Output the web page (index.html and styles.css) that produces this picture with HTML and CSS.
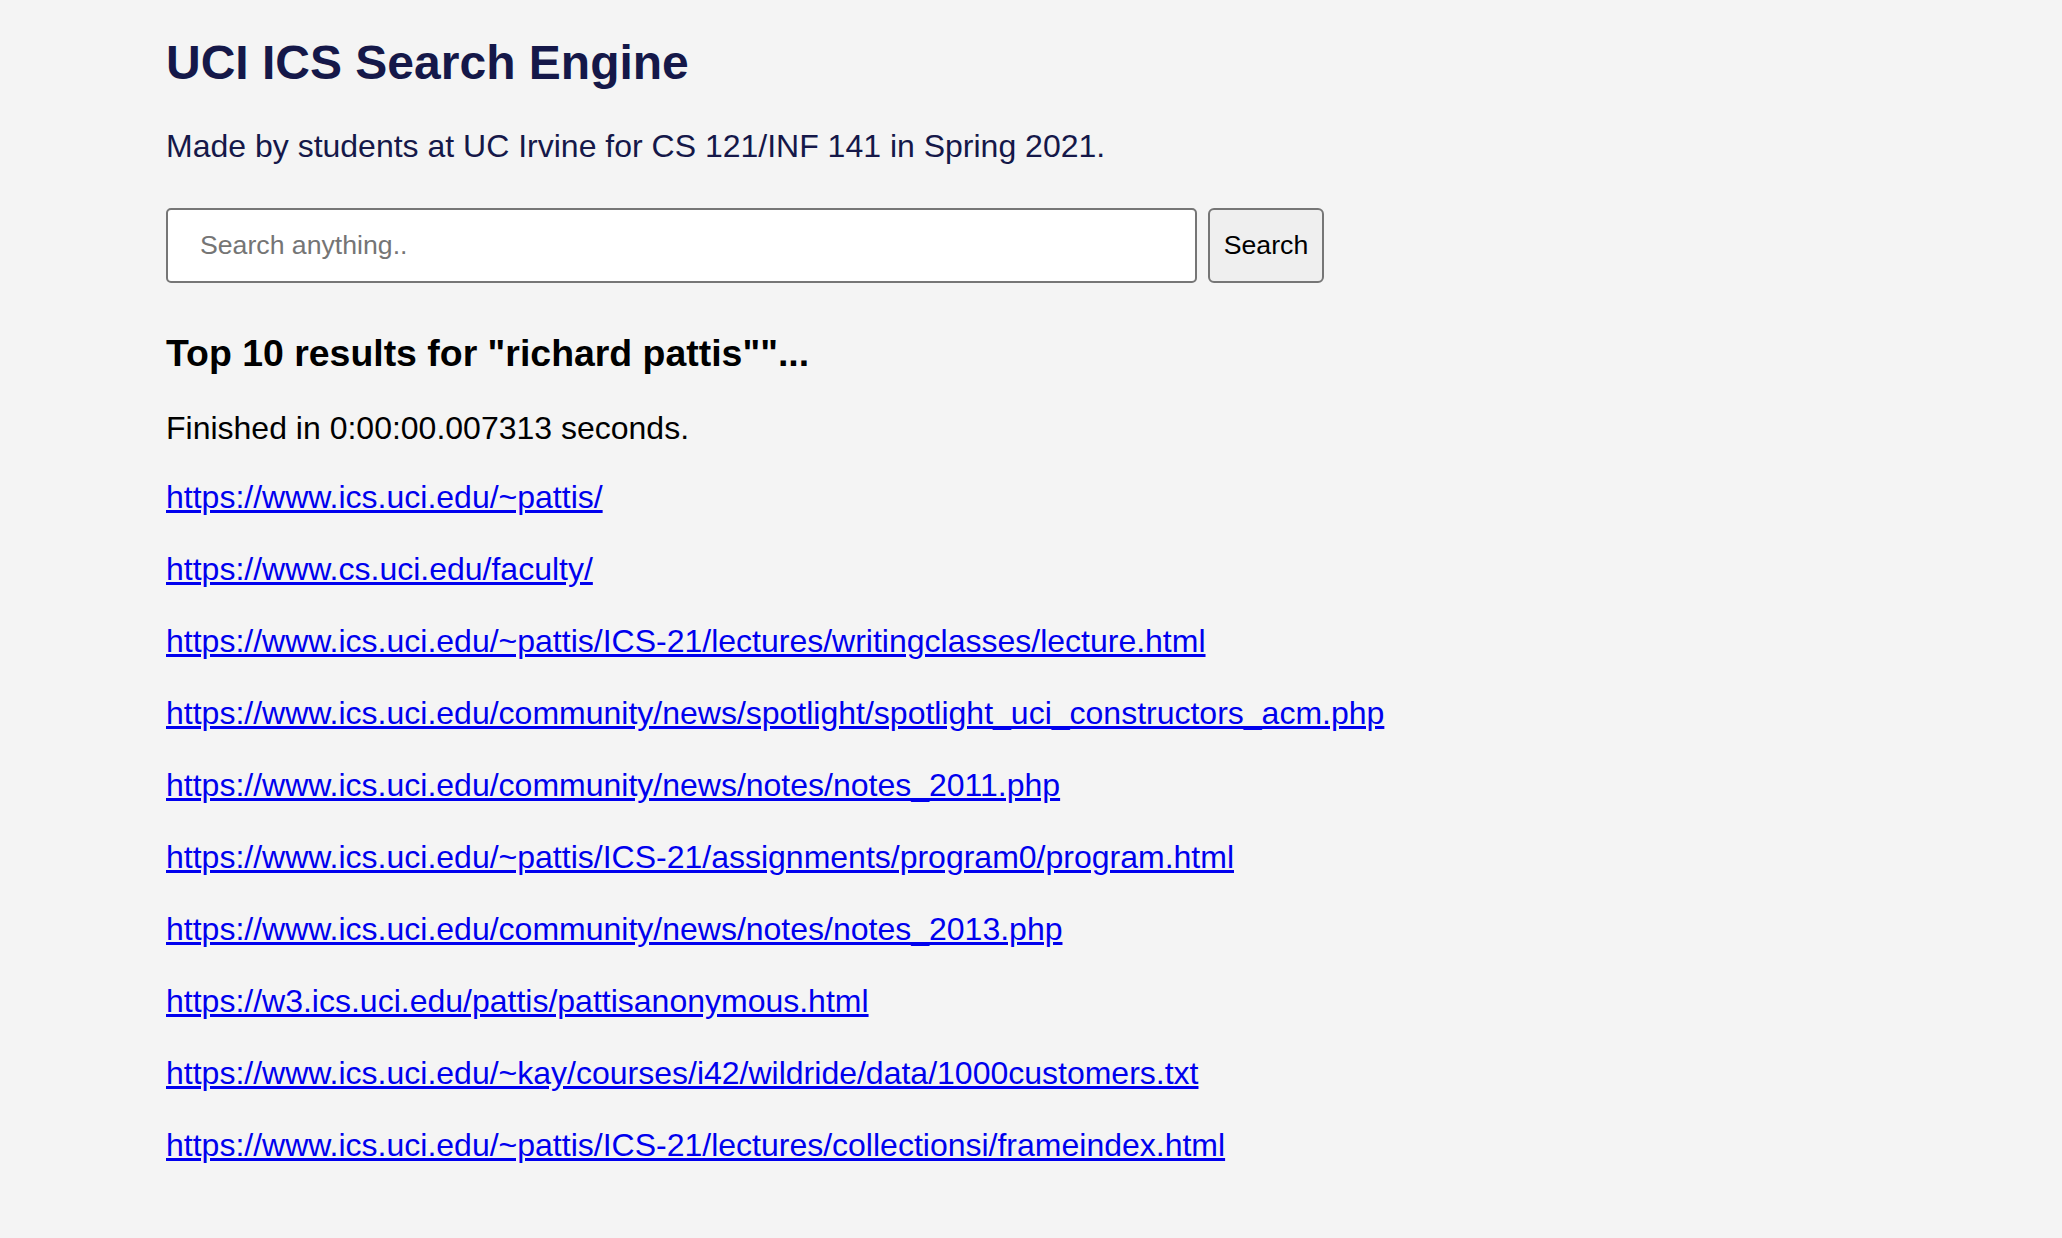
FILE: index.html
```html
<!DOCTYPE html>
<html lang="en">
<head>
<meta charset="utf-8">
<title>UCI ICS Search Engine</title>
<link rel="stylesheet" href="styles.css">
</head>
<body>
<main class="page">
  <h1 class="title">UCI ICS Search Engine</h1>
  <p class="subtitle">Made by students at UC Irvine for CS 121/INF 141 in Spring 2021.</p>
  <form class="search" onsubmit="return false;">
    <input class="search-input" type="text" placeholder="Search anything..">
    <button class="search-btn" type="submit">Search</button>
  </form>
  <h3 class="results-heading">Top 10 results for "richard pattis""...</h3>
  <p class="timing">Finished in 0:00:00.007313 seconds.</p>
  <ul class="results">
    <li><a class="result-link" href="https://www.ics.uci.edu/~pattis/">https://www.ics.uci.edu/~pattis/</a></li>
    <li><a class="result-link" href="https://www.cs.uci.edu/faculty/">https://www.cs.uci.edu/faculty/</a></li>
    <li><a class="result-link" href="https://www.ics.uci.edu/~pattis/ICS-21/lectures/writingclasses/lecture.html">https://www.ics.uci.edu/~pattis/ICS-21/lectures/writingclasses/lecture.html</a></li>
    <li><a class="result-link" href="https://www.ics.uci.edu/community/news/spotlight/spotlight_uci_constructors_acm.php">https://www.ics.uci.edu/community/news/spotlight/spotlight_uci_constructors_acm.php</a></li>
    <li><a class="result-link" href="https://www.ics.uci.edu/community/news/notes/notes_2011.php">https://www.ics.uci.edu/community/news/notes/notes_2011.php</a></li>
    <li><a class="result-link" href="https://www.ics.uci.edu/~pattis/ICS-21/assignments/program0/program.html">https://www.ics.uci.edu/~pattis/ICS-21/assignments/program0/program.html</a></li>
    <li><a class="result-link" href="https://www.ics.uci.edu/community/news/notes/notes_2013.php">https://www.ics.uci.edu/community/news/notes/notes_2013.php</a></li>
    <li><a class="result-link" href="https://w3.ics.uci.edu/pattis/pattisanonymous.html">https://w3.ics.uci.edu/pattis/pattisanonymous.html</a></li>
    <li><a class="result-link" href="https://www.ics.uci.edu/~kay/courses/i42/wildride/data/1000customers.txt">https://www.ics.uci.edu/~kay/courses/i42/wildride/data/1000customers.txt</a></li>
    <li><a class="result-link" href="https://www.ics.uci.edu/~pattis/ICS-21/lectures/collectionsi/frameindex.html">https://www.ics.uci.edu/~pattis/ICS-21/lectures/collectionsi/frameindex.html</a></li>
  </ul>
</main>
</body>
</html>
```
FILE: styles.css
```css
html, body {
  margin: 0;
  padding: 0;
  background: #f4f4f4;
}

body {
  font-family: "Liberation Sans", Arial, Helvetica, sans-serif;
  font-size: 32px;
  color: #000;
}

.page {
  padding: 35px 0 40px 166px;
}

.title {
  margin: 0;
  font-size: 48px;
  line-height: 55px;
  font-weight: bold;
  color: #151849;
}

.subtitle {
  margin: 38px 0 0;
  line-height: 37px;
  color: #151849;
}

.search {
  display: flex;
  gap: 11px;
  margin: 43px 0 0;
  height: 75px;
}

.search-input {
  box-sizing: border-box;
  width: 1031px;
  height: 75px;
  margin: 0;
  padding: 0 32px;
  border: 2px solid #767676;
  border-radius: 5px;
  background: #fff;
  font-family: "Liberation Sans", Arial, Helvetica, sans-serif;
  font-size: 26.67px;
  color: #000;
  outline: none;
}

.search-input::placeholder {
  color: #757575;
}

.search-btn {
  box-sizing: border-box;
  width: 116px;
  height: 75px;
  margin: 0;
  padding: 0;
  border: 2px solid #767676;
  border-radius: 6px;
  background: #efefef;
  font-family: "Liberation Sans", Arial, Helvetica, sans-serif;
  font-size: 26.67px;
  color: #000;
}

.results-heading {
  margin: 49px 0 0;
  font-size: 37.44px;
  line-height: 43px;
  font-weight: bold;
}

.timing {
  margin: 35px 0 0;
  line-height: 37px;
}

.results {
  list-style: none;
  margin: 32px 0 0;
  padding: 0;
  display: flex;
  flex-direction: column;
  gap: 35px;
}

.results li {
  line-height: 37px;
}

.result-link {
  color: #0000ee;
  text-decoration: underline;
}
```
